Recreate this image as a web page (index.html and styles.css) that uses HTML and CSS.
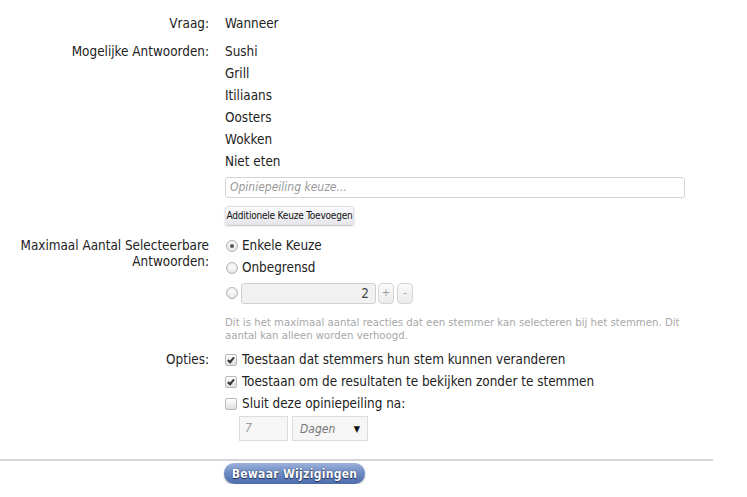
FILE: index.html
```html
<!DOCTYPE html>
<html lang="nl">
<head>
<meta charset="utf-8">
<title>Opiniepeiling</title>
<link rel="stylesheet" href="styles.css">
</head>
<body>
<form class="poll-form">
  <div class="row row-question">
    <div class="label">Vraag:</div>
    <div class="value"><div class="line">Wanneer</div></div>
  </div>

  <div class="row row-answers">
    <div class="label">Mogelijke Antwoorden:</div>
    <div class="value">
      <div class="line">Sushi</div>
      <div class="line">Grill</div>
      <div class="line">Itiliaans</div>
      <div class="line">Oosters</div>
      <div class="line">Wokken</div>
      <div class="line">Niet eten</div>
      <div class="text-input">Opiniepeiling keuze...</div>
      <button type="button" class="small-btn">Additionele Keuze Toevoegen</button>
    </div>
  </div>

  <div class="row row-max">
    <div class="label">Maximaal Aantal Selecteerbare Antwoorden:</div>
    <div class="value">
      <div class="line choice"><span class="radio checked"></span>Enkele Keuze</div>
      <div class="line choice"><span class="radio"></span>Onbegrensd</div>
      <div class="choice number-row">
        <span class="radio"></span>
        <span class="num-input">2</span>
        <span class="step-btn">+</span>
        <span class="step-btn">-</span>
      </div>
      <p class="help">Dit is het maximaal aantal reacties dat een stemmer kan selecteren bij het stemmen. Dit aantal kan alleen worden verhoogd.</p>
    </div>
  </div>

  <div class="row row-options">
    <div class="label">Opties:</div>
    <div class="value">
      <div class="line choice"><span class="check checked"></span>Toestaan dat stemmers hun stem kunnen veranderen</div>
      <div class="line choice"><span class="check checked"></span>Toestaan om de resultaten te bekijken zonder te stemmen</div>
      <div class="line choice"><span class="check"></span>Sluit deze opiniepeiling na:</div>
      <div class="close-after">
        <span class="days-input">7</span>
        <span class="select">Dagen<span class="arrow">&#9660;</span></span>
      </div>
    </div>
  </div>

  <div class="divider"></div>
  <div class="submit-row">
    <button type="button" class="save-btn">Bewaar Wijzigingen</button>
  </div>
</form>
</body>
</html>
```

FILE: styles.css
```css
html, body {
  margin: 0;
  padding: 0;
  background: #ffffff;
}

body {
  font-family: "DejaVu Sans Condensed", "DejaVu Sans", sans-serif;
  font-size: 13.4px;
  color: #222222;
}

.poll-form {
  padding-top: 13px;
}

.row {
  display: grid;
  grid-template-columns: 209px 1fr;
  column-gap: 16px;
  margin-bottom: 6px;
}

.label {
  text-align: right;
  line-height: 16px;
  padding-top: 3px;
}

.value {
  min-width: 0;
}

.line {
  line-height: 22px;
  height: 22px;
}

.text-input {
  margin-top: 4px;
  width: 454px;
  height: 19px;
  border: 1px solid #d4d4d4;
  border-radius: 3px;
  padding-left: 4px;
  box-sizing: content-box;
  font-size: 12px;
  line-height: 19px;
  font-style: italic;
  color: #9a9a9a;
}

.small-btn {
  display: block;
  margin-top: 8px;
  width: 129px;
  height: 19px;
  padding: 0;
  font-family: "DejaVu Sans Condensed", "DejaVu Sans", sans-serif;
  font-size: 10px;
  letter-spacing: -0.2px;
  color: #111111;
  border: 1px solid #e2e2e6;
  border-radius: 3px;
  background: linear-gradient(#fbfbfd, #e6e6ec);
  box-shadow: 0 1px 2px rgba(0, 0, 0, 0.25);
}

.row-max {
  margin-top: 10px;
}

.choice {
  display: flex;
  align-items: center;
}

.radio {
  width: 10px;
  height: 10px;
  border-radius: 50%;
  border: 1px solid #b5b5b5;
  background: radial-gradient(circle at 50% 35%, #ffffff, #dcdcdc);
  margin-left: 1px;
  margin-right: 4px;
  position: relative;
  flex: none;
}

.radio.checked::after {
  content: "";
  position: absolute;
  left: 3px;
  top: 3px;
  width: 4px;
  height: 4px;
  border-radius: 50%;
  background: #555555;
}

.number-row {
  height: 24px;
  margin-top: 2px;
}

.number-row .radio {
  margin-right: 3px;
}

.num-input {
  width: 127px;
  height: 19px;
  border: 1px solid #cfcfcf;
  border-radius: 3px;
  background: #f1f1f1;
  text-align: right;
  padding-right: 6px;
  line-height: 19px;
  color: #444444;
}

.step-btn {
  width: 14px;
  height: 19px;
  margin-left: 2px;
  border: 1px solid #d4d4d4;
  border-radius: 4px;
  background: linear-gradient(#fafafa, #ececec);
  color: #9a9a9a;
  font-size: 11px;
  line-height: 18px;
  text-align: center;
}

.step-btn + .step-btn {
  margin-left: 3px;
}

.help {
  margin: 11px 0 0 0;
  width: 470px;
  font-size: 11.3px;
  line-height: 13px;
  color: #a8a8a8;
}

.row-options {
  margin-top: 7px;
}

.check {
  width: 10px;
  height: 10px;
  border: 1px solid #b8b8b8;
  border-radius: 2px;
  background: linear-gradient(#ffffff, #dedede);
  margin-right: 5px;
  position: relative;
  flex: none;
}

.check.checked::after {
  content: "";
  position: absolute;
  left: 3px;
  top: 1px;
  width: 2px;
  height: 5px;
  border: solid #333333;
  border-width: 0 2px 2px 0;
  transform: rotate(40deg);
}

.close-after {
  display: flex;
  gap: 4px;
  margin-left: 14px;
  margin-top: 1px;
}

.days-input {
  width: 42px;
  height: 23px;
  border: 1px solid #dcdcdc;
  background: #f6f6f6;
  padding-left: 5px;
  line-height: 23px;
  font-size: 12px;
  font-style: italic;
  color: #999999;
}

.select {
  display: flex;
  align-items: center;
  justify-content: space-between;
  width: 60px;
  height: 23px;
  border: 1px solid #dcdcdc;
  background: #f6f6f6;
  padding: 0 7px 0 7px;
  font-size: 12px;
  font-style: italic;
  color: #777777;
}

.arrow {
  font-style: normal;
  font-size: 9px;
  color: #111111;
}

.divider {
  margin-top: 18px;
  width: 713px;
  height: 2px;
  background: #d4d4da;
}

.submit-row {
  padding-left: 224px;
  padding-top: 2px;
}

.save-btn {
  width: 141px;
  height: 21px;
  padding: 0;
  border: none;
  border-radius: 10px;
  background: linear-gradient(#9cb2db 0%, #6f8cc3 45%, #4d6cab 100%);
  box-shadow: 0 1px 2px rgba(0, 0, 0, 0.3);
  font-family: "DejaVu Sans Condensed", "DejaVu Sans", sans-serif;
  font-size: 12px;
  font-weight: bold;
  letter-spacing: 0.3px;
  color: #ffffff;
  text-shadow: 0 1px 1px #1d2f55, 0 0 1px #1d2f55;
}
```
